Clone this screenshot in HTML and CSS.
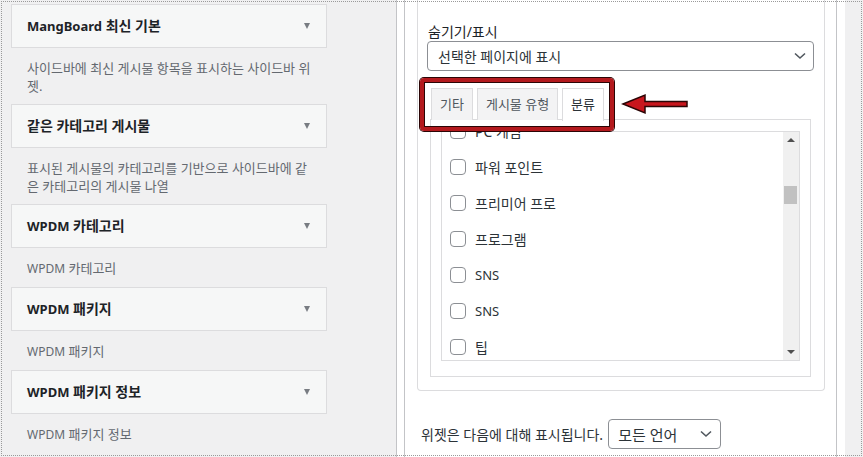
FILE: index.html
```html
<!DOCTYPE html>
<html lang="ko">
<head>
<meta charset="utf-8">
<title>위젯</title>
<link rel="stylesheet" href="styles.css">
</head>
<body>
<div class="page">
  <aside class="avail">
    <div class="widget"><h3 class="w-title"><span class="lat">MangBoard</span> 최신 기본</h3><span class="caret"></span></div>
    <p class="desc">사이드바에 최신 게시물 항목을 표시하는 사이드바 위<br>젯.</p>
    <div class="widget"><h3 class="w-title">같은 카테고리 게시물</h3><span class="caret"></span></div>
    <p class="desc">표시된 게시물의 카테고리를 기반으로 사이드바에 같<br>은 카테고리의 게시물 나열</p>
    <div class="widget"><h3 class="w-title"><span class="lat">WPDM</span> 카테고리</h3><span class="caret"></span></div>
    <p class="desc"><span class="lat">WPDM</span> 카테고리</p>
    <div class="widget"><h3 class="w-title"><span class="lat">WPDM</span> 패키지</h3><span class="caret"></span></div>
    <p class="desc"><span class="lat">WPDM</span> 패키지</p>
    <div class="widget"><h3 class="w-title"><span class="lat">WPDM</span> 패키지 정보</h3><span class="caret"></span></div>
    <p class="desc"><span class="lat">WPDM</span> 패키지 정보</p>
  </aside>

  <main class="sidebar">
    <div class="holder">
      <div class="card">
        <div class="label">숨기기/표시</div>
        <div class="select wide">
          <span>선택한 페이지에 표시</span>
          <svg class="chev" width="12" height="8" viewBox="0 0 12 8"><polyline points="1,1.5 6,6 11,1.5" fill="none" stroke="#50575e" stroke-width="1.6"/></svg>
        </div>
        <div class="tabs">
          <div class="tab">기타</div>
          <div class="tab">게시물 유형</div>
          <div class="tab active">분류</div>
        </div>
        <div class="panel">
          <div class="list">
            <div class="items">
              <label class="row"><span class="cb"></span><span>PC 게임</span></label>
              <label class="row"><span class="cb"></span><span>파워 포인트</span></label>
              <label class="row"><span class="cb"></span><span>프리미어 프로</span></label>
              <label class="row"><span class="cb"></span><span>프로그램</span></label>
              <label class="row"><span class="cb"></span><span class="lat">SNS</span></label>
              <label class="row"><span class="cb"></span><span class="lat">SNS</span></label>
              <label class="row"><span class="cb"></span><span>팁</span></label>
            </div>
            <div class="scrollbar">
              <div class="sb-btn"><span class="tri-up"></span></div>
              <div class="sb-track"><div class="sb-thumb"></div></div>
              <div class="sb-btn"><span class="tri-down"></span></div>
            </div>
          </div>
        </div>
      </div>
      <div class="lang">
        <span class="lang-text">위젯은 다음에 대해 표시됩니다.</span>
        <div class="select small">
          <span>모든 언어</span>
          <svg class="chev" width="12" height="8" viewBox="0 0 12 8"><polyline points="1,1.5 6,6 11,1.5" fill="none" stroke="#50575e" stroke-width="1.6"/></svg>
        </div>
      </div>
    </div>
  </main>

  <div class="gutter"></div>

  <div class="highlight"></div>
  <svg class="arrow" width="72" height="28" viewBox="0 0 72 28">
    <polygon points="3,14 25,5 25,11.5 67,11.5 67,16.5 25,16.5 25,23" fill="#c8161d" stroke="#2b0505" stroke-width="1.5" stroke-linejoin="miter"/>
  </svg>
  <div class="frame"></div>
</div>
</body>
</html>
```

FILE: styles.css
```css
* { box-sizing: border-box; }
html, body { margin: 0; padding: 0; }
body {
  width: 863px;
  height: 457px;
  overflow: hidden;
  background: #ffffff;
  font-family: "Noto Sans", "Noto Sans CJK KR", sans-serif;
  color: #1d2327;
}
.page {
  position: relative;
  display: flex;
  width: 863px;
  height: 457px;
  overflow: hidden;
}

/* left: available widgets */
.avail {
  width: 396px;
  flex: none;
  background: #f0f0f1;
  padding: 4px 0 0 11px;
}
.widget {
  width: 316px;
  height: 44px;
  border: 1px solid #dcdcde;
  background: #f6f7f7;
  display: flex;
  align-items: center;
  justify-content: space-between;
  padding: 0 16px 0 15px;
}
.w-title {
  margin: 0;
  font-size: 14px;
  font-weight: 700;
  color: #1d2327;
  line-height: 18px;
}
.w-title .lat { font-size: 13px; }
.caret {
  width: 0;
  height: 0;
  border-left: 3.5px solid transparent;
  border-right: 3.5px solid transparent;
  border-top: 6px solid #787c82;
}
.desc {
  margin: 11px 0 9px;
  padding-left: 16px;
  font-size: 13px;
  line-height: 18px;
  color: #646970;
}
.desc .lat { font-size: 12px; }

/* center: sidebar */
.sidebar {
  width: 449px;
  flex: none;
  background: #ffffff;
  border-left: 1px solid #c3c4c7;
  padding-left: 7px;
}
.holder {
  width: 433px;
  height: 457px;
  border-left: 1px solid #c3c4c7;
  border-right: 1px solid #c3c4c7;
}
.card {
  margin: 0 11px 0 12px;
  border: 1px solid #dcdcde;
  border-top: 0;
  border-radius: 0 0 4px 4px;
  padding: 23px 10px 13px 9px;
  height: 391px;
}
.label {
  font-size: 14px;
  line-height: 18px;
  color: #1d2327;
  padding-left: 1px;
}
.select {
  display: flex;
  align-items: center;
  justify-content: space-between;
  height: 30px;
  border: 1px solid #8c8f94;
  border-radius: 4px;
  background: #fff;
  color: #2c3338;
}
.select.wide { padding: 0 7px 0 10px; font-size: 14px; }
.select.small { width: 113px; padding: 0 8px 0 9px; font-size: 15px; }
.chev { flex: none; }

.tabs {
  display: flex;
  gap: 4px;
  margin-top: 17px;
  padding-left: 4px;
  position: relative;
  z-index: 1;
}
.tab {
  height: 32px;
  padding: 0 8px;
  border: 1px solid #dcdcde;
  border-bottom: 0;
  background: #f3f3f4;
  font-size: 13px;
  line-height: 31px;
  color: #50575e;
}
.tab.active {
  background: #ffffff;
  color: #2c3338;
  height: 33px;
  margin-bottom: -1px;
}
.panel {
  margin: -1px 3px 0;
  height: 258px;
  border: 1px solid #dcdcde;
  padding: 11px 10px 15px 10px;
}
.list {
  display: flex;
  height: 230px;
  border: 1px solid #dcdcde;
  overflow: hidden;
}
.items {
  flex: 1;
  overflow: hidden;
  padding-left: 8px;
}
.row {
  display: flex;
  align-items: center;
  height: 36px;
  font-size: 14px;
  color: #2c3338;
}
.row .lat { font-size: 13px; }
.row:first-child { margin-top: -19px; }
.cb {
  width: 16px;
  height: 16px;
  border: 1px solid #8c8f94;
  border-radius: 4px;
  background: #fff;
  margin-right: 9px;
  flex: none;
}
.scrollbar {
  width: 16px;
  flex: none;
  background: #f0f0f0;
  display: flex;
  flex-direction: column;
}
.sb-btn {
  height: 16px;
  display: flex;
  align-items: center;
  justify-content: center;
}
.tri-up, .tri-down {
  width: 0;
  height: 0;
  border-left: 4px solid transparent;
  border-right: 4px solid transparent;
}
.tri-up { border-bottom: 4px solid #505050; }
.tri-down { border-top: 4px solid #505050; }
.sb-track { flex: 1; padding: 38px 2px 0 1px; }
.sb-thumb { height: 18px; background: #c1c1c1; }

.lang {
  display: flex;
  align-items: center;
  gap: 5px;
  margin-top: 28px;
  padding-left: 16px;
  font-size: 14px;
  color: #2c3338;
}

.gutter {
  flex: 1;
  background: #f0f0f1;
}

/* annotation overlays */
.highlight {
  position: absolute;
  left: 420px;
  top: 78px;
  width: 194px;
  height: 53px;
  border: 4px solid #b3191d;
  border-radius: 4px;
  box-shadow: 0 0 0 1px #2b0505, inset 0 0 0 1px #2b0505;
  z-index: 5;
}
.arrow {
  position: absolute;
  left: 620px;
  top: 90px;
  z-index: 5;
}
.frame {
  position: absolute;
  left: 1px;
  top: 1px;
  right: 1px;
  bottom: 1px;
  border: 1px dotted #9a9a9a;
  pointer-events: none;
  z-index: 6;
}
```
